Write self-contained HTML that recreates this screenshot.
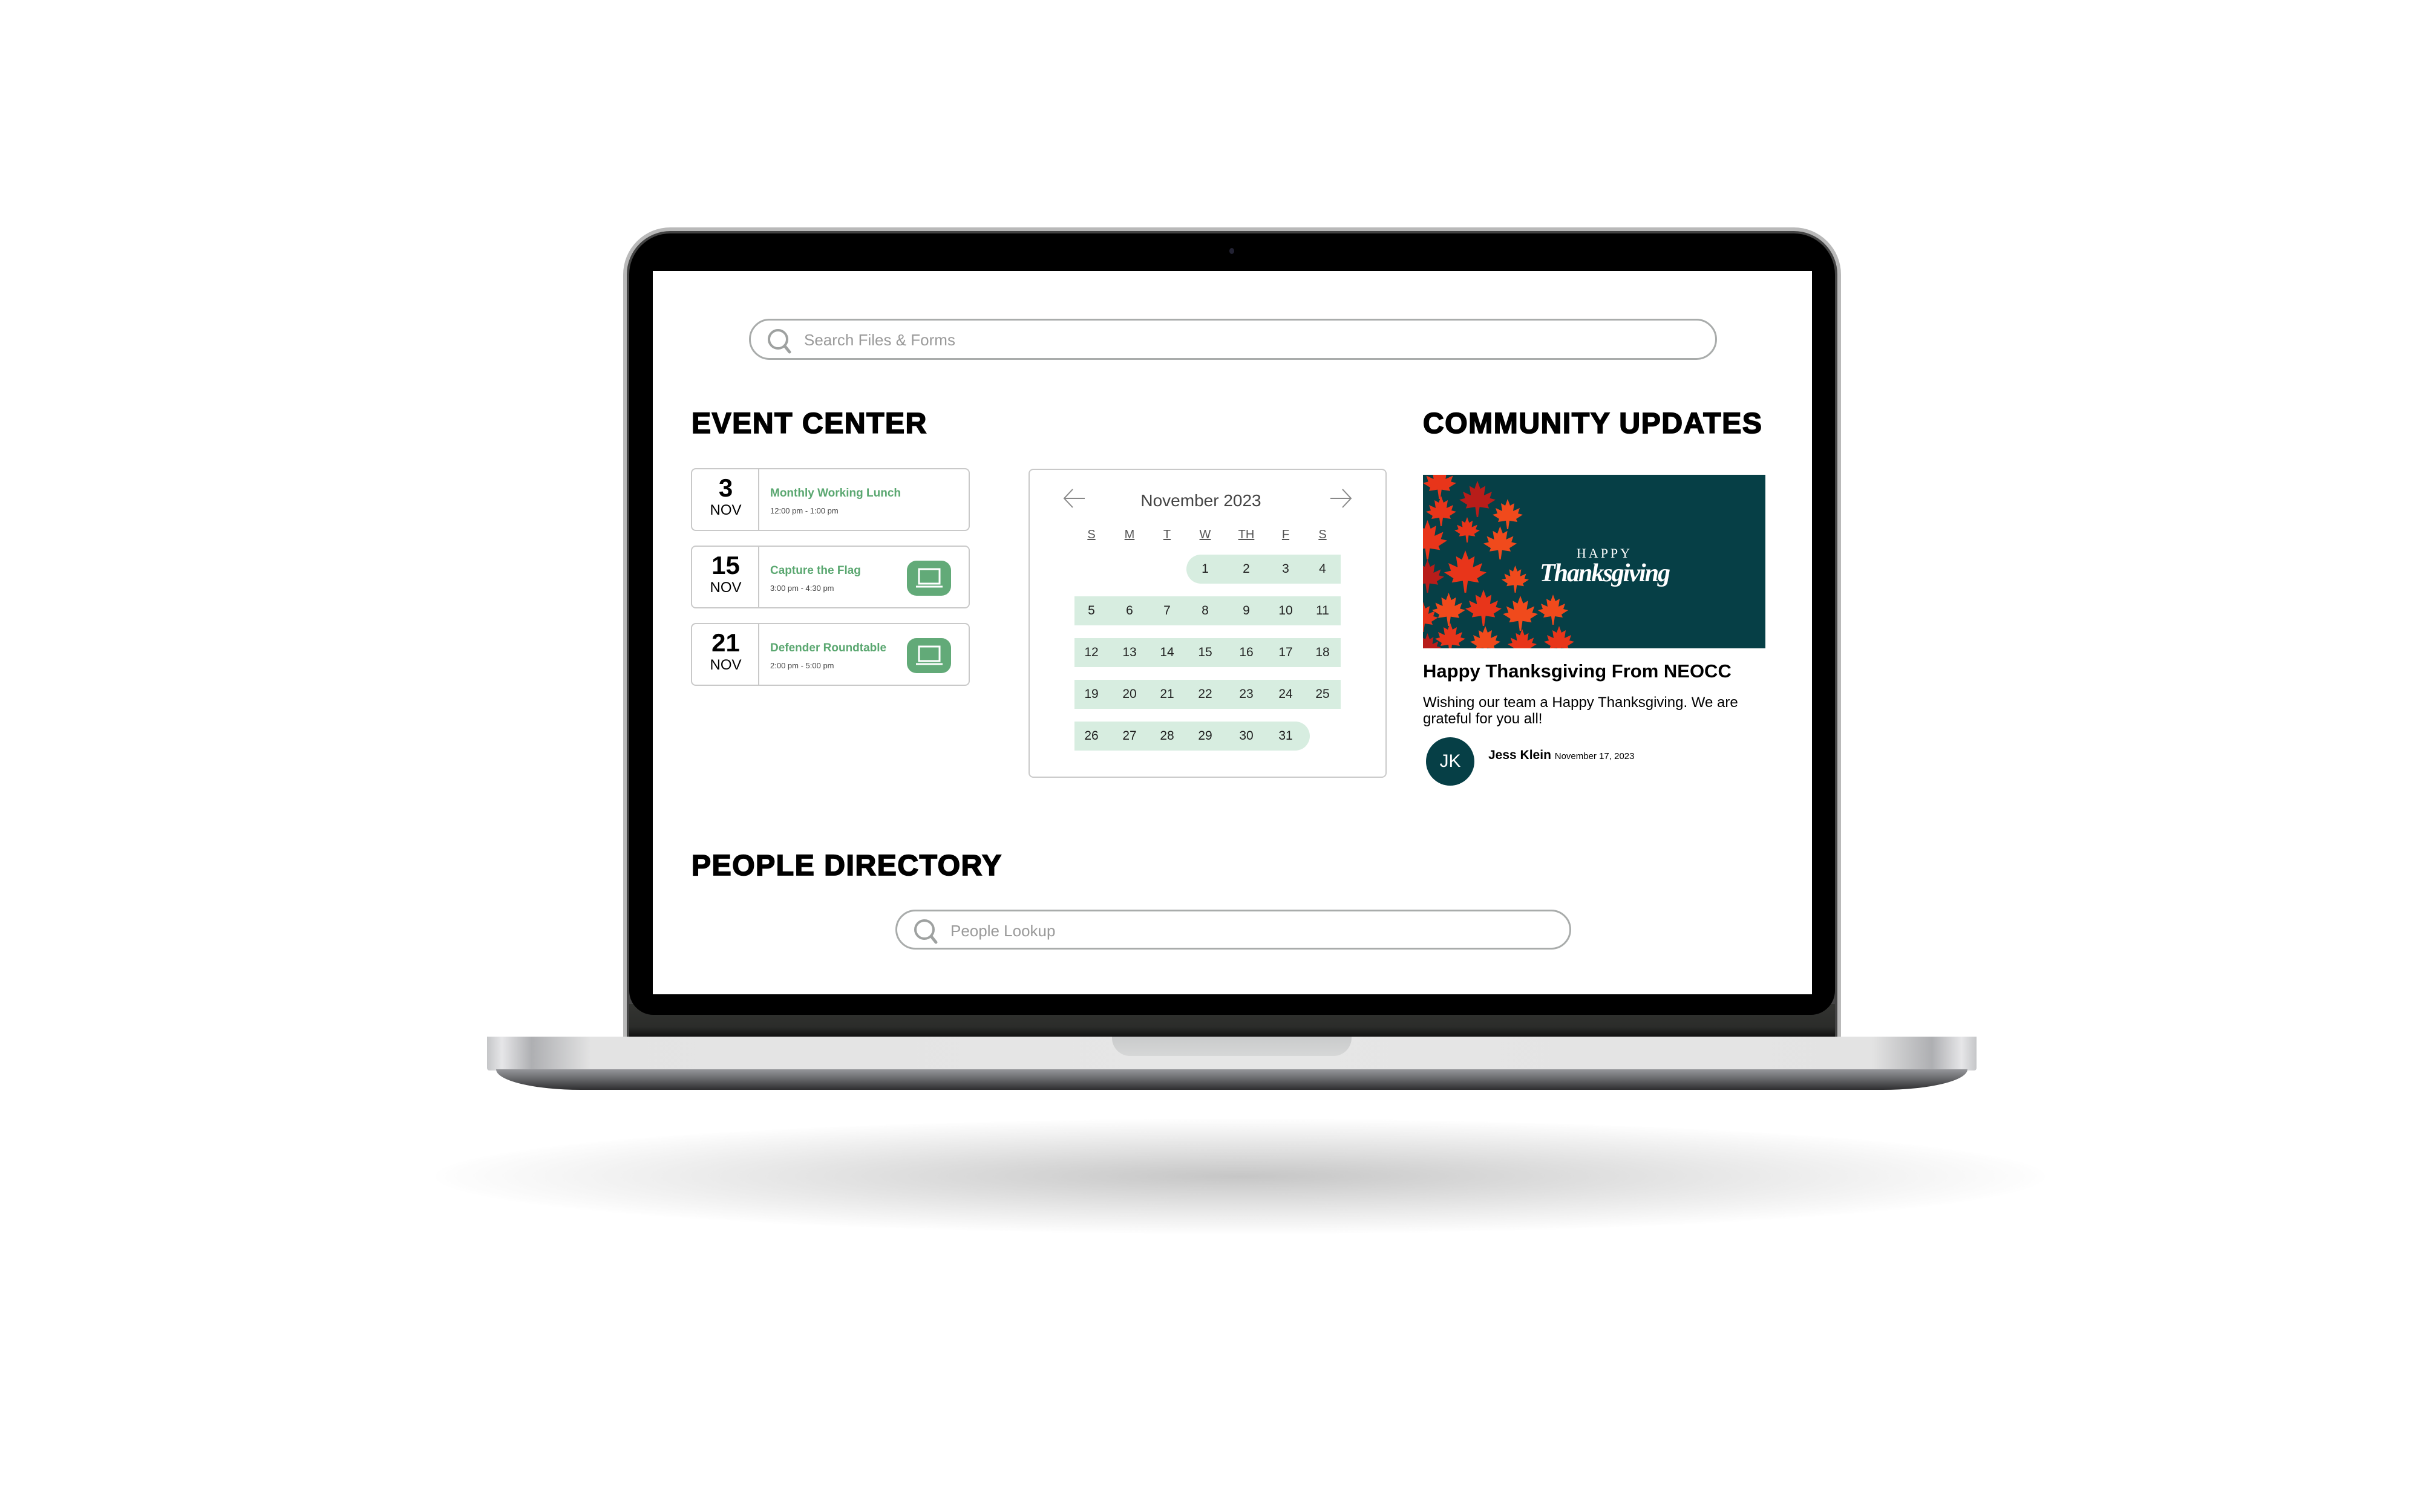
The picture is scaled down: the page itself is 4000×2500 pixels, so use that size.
<!DOCTYPE html>
<html><head><meta charset="utf-8"><style>
*{margin:0;padding:0;box-sizing:border-box}
body{width:4000px;height:2500px;background:#fff;position:relative;overflow:hidden;font-family:"Liberation Sans",Arial,sans-serif}
.a{position:absolute}
.h{position:absolute;font-weight:bold;font-size:48px;color:#000;-webkit-text-stroke:1.8px #000;letter-spacing:1.6px;line-height:1}
.search{position:absolute;border:3px solid #a9acab;border-radius:40px;background:#fff}
.search span{position:absolute;color:#9a9a9a;font-size:26px}
.card{position:absolute;left:1142px;width:461px;height:104px;border:2px solid #c9c9c9;border-radius:8px;background:#fff}
.card .dc{position:absolute;left:0;top:0;width:111px;height:100%;border-right:2px solid #c9c9c9}
.card .n{position:absolute;width:111px;text-align:center;top:10px;font-size:42px;font-weight:bold;line-height:1}
.card .m{position:absolute;width:111px;text-align:center;top:56px;font-size:24px;line-height:1}
.card .t{position:absolute;left:129px;top:30px;font-size:19px;font-weight:bold;color:#5aa770;line-height:1}
.card .tm{position:absolute;left:129px;top:62px;font-size:13px;color:#444;line-height:1}
.card .b{position:absolute;left:355px;top:23px;width:73px;height:58px;border-radius:16px;background:#62aa78}
.band{position:absolute;height:48px;background:#d7ede0}
.num{position:absolute;width:60px;margin-left:-30px;text-align:center;font-size:21px;color:#222;line-height:48px}
.wd{position:absolute;width:60px;margin-left:-30px;text-align:center;font-size:20px;color:#555;text-decoration:underline;line-height:1}
</style></head><body>

<div class="a" style="left:720px;top:1850px;width:2660px;height:190px;border-radius:50%;background:radial-gradient(ellipse at center,rgba(160,160,160,.6) 0%,rgba(195,195,195,.35) 45%,rgba(255,255,255,0) 72%)"></div>

<div class="a" style="left:1030px;top:376px;width:2013px;height:1345px;border-radius:78px 78px 0 0;background:#b9b9b9"></div>
<div class="a" style="left:1036px;top:382px;width:2001px;height:1339px;border-radius:72px 72px 0 0;background:#444"></div>
<div class="a" style="left:1040px;top:1660px;width:1993px;height:54px;background:linear-gradient(#333431,#2b2c2a 70%,#111)"></div>
<div class="a" style="left:1040px;top:386px;width:1993px;height:1292px;border-radius:68px 68px 40px 40px;background:#000"></div>
<div class="a" style="left:2032px;top:410px;width:8px;height:10px;border-radius:50%;background:#223"></div>

<div class="a" style="left:805px;top:1714px;width:2462px;height:56px;background:linear-gradient(90deg,#c5c6c8 0%,#e6e6e8 1%,#aeafb2 3%,#e3e3e3 7%,#e6e6e6 50%,#e3e3e3 93%,#aeafb2 97%,#e6e6e8 99%,#c5c6c8 100%);border-radius:0 0 4px 4px"></div>
<div class="a" style="left:820px;top:1768px;width:2432px;height:34px;border-radius:0 0 140px 140px/0 0 34px 34px;background:linear-gradient(#95969a,#6e6f72 40%,#2e2e30)"></div>
<div class="a" style="left:1838px;top:1714px;width:396px;height:32px;border-radius:0 0 30px 30px;background:linear-gradient(#c9cacb,#d6d7d7)"></div>

<div class="a" style="left:1079px;top:448px;width:1916px;height:1196px;background:#fff;overflow:hidden"></div>

<div class="search" style="left:1238px;top:527px;width:1600px;height:68px">
<svg class="a" style="left:26px;top:12px" width="46" height="46" viewBox="0 0 46 46"><circle cx="19" cy="19" r="15" fill="none" stroke="#9ea1a0" stroke-width="4"/><path d="M30 30 L38 40" stroke="#9ea1a0" stroke-width="5" stroke-linecap="round"/></svg>
<span style="left:88px;top:17px">Search Files &amp; Forms</span>
</div>

<div class="h" style="left:1143px;top:677px">EVENT CENTER</div>
<div class="h" style="left:2352px;top:677px">COMMUNITY UPDATES</div>
<div class="h" style="left:1143px;top:1408px">PEOPLE DIRECTORY</div>

<div class="card" style="top:774px"><div class="dc"></div><div class="n">3</div><div class="m">NOV</div><div class="t">Monthly Working Lunch</div><div class="tm">12:00 pm - 1:00 pm</div></div>
<div class="card" style="top:902px"><div class="dc"></div><div class="n">15</div><div class="m">NOV</div><div class="t">Capture the Flag</div><div class="tm">3:00 pm - 4:30 pm</div>
<div class="b"><svg class="a" style="left:14px;top:12px" width="46" height="34" viewBox="0 0 46 34"><rect x="6" y="2" width="34" height="24" fill="none" stroke="#fff" stroke-width="3"/><path d="M1 31 H45" stroke="#fff" stroke-width="3"/></svg></div></div>
<div class="card" style="top:1030px"><div class="dc"></div><div class="n">21</div><div class="m">NOV</div><div class="t">Defender Roundtable</div><div class="tm">2:00 pm - 5:00 pm</div>
<div class="b"><svg class="a" style="left:14px;top:12px" width="46" height="34" viewBox="0 0 46 34"><rect x="6" y="2" width="34" height="24" fill="none" stroke="#fff" stroke-width="3"/><path d="M1 31 H45" stroke="#fff" stroke-width="3"/></svg></div></div>

<div class="a" style="left:1700px;top:775px;width:592px;height:511px;border:2px solid #c9c9c9;border-radius:8px"></div>
<svg class="a" style="left:1755px;top:806px" width="42" height="36" viewBox="0 0 42 36"><path d="M38 18 H4 M18 3 L4 18 L18 33" fill="none" stroke="#888" stroke-width="2"/></svg>
<svg class="a" style="left:2195px;top:806px" width="42" height="36" viewBox="0 0 42 36"><path d="M4 18 H38 M24 3 L38 18 L24 33" fill="none" stroke="#888" stroke-width="2"/></svg>
<div class="a" style="left:1785px;top:812px;width:400px;text-align:center;font-size:28px;color:#444">November 2023</div>
<div class="wd" style="left:1804px;top:874px">S</div><div class="wd" style="left:1867px;top:874px">M</div><div class="wd" style="left:1929px;top:874px">T</div><div class="wd" style="left:1992px;top:874px">W</div><div class="wd" style="left:2060px;top:874px">TH</div><div class="wd" style="left:2125px;top:874px">F</div><div class="wd" style="left:2186px;top:874px">S</div>
<div class="band" style="left:1961px;top:917px;width:255px;border-radius:24px 0 0 24px"></div>
<div class="band" style="left:1776px;top:986px;width:440px"></div>
<div class="band" style="left:1776px;top:1055px;width:440px"></div>
<div class="band" style="left:1776px;top:1124px;width:440px"></div>
<div class="band" style="left:1776px;top:1193px;width:389px;border-radius:0 24px 24px 0"></div>
<div class="num" style="left:1992px;top:917px">1</div><div class="num" style="left:2060px;top:917px">2</div><div class="num" style="left:2125px;top:917px">3</div><div class="num" style="left:2186px;top:917px">4</div>
<div class="num" style="left:1804px;top:986px">5</div><div class="num" style="left:1867px;top:986px">6</div><div class="num" style="left:1929px;top:986px">7</div><div class="num" style="left:1992px;top:986px">8</div><div class="num" style="left:2060px;top:986px">9</div><div class="num" style="left:2125px;top:986px">10</div><div class="num" style="left:2186px;top:986px">11</div>
<div class="num" style="left:1804px;top:1055px">12</div><div class="num" style="left:1867px;top:1055px">13</div><div class="num" style="left:1929px;top:1055px">14</div><div class="num" style="left:1992px;top:1055px">15</div><div class="num" style="left:2060px;top:1055px">16</div><div class="num" style="left:2125px;top:1055px">17</div><div class="num" style="left:2186px;top:1055px">18</div>
<div class="num" style="left:1804px;top:1124px">19</div><div class="num" style="left:1867px;top:1124px">20</div><div class="num" style="left:1929px;top:1124px">21</div><div class="num" style="left:1992px;top:1124px">22</div><div class="num" style="left:2060px;top:1124px">23</div><div class="num" style="left:2125px;top:1124px">24</div><div class="num" style="left:2186px;top:1124px">25</div>
<div class="num" style="left:1804px;top:1193px">26</div><div class="num" style="left:1867px;top:1193px">27</div><div class="num" style="left:1929px;top:1193px">28</div><div class="num" style="left:1992px;top:1193px">29</div><div class="num" style="left:2060px;top:1193px">30</div><div class="num" style="left:2125px;top:1193px">31</div>

<svg class="a" style="left:2352px;top:785px" width="566" height="287" viewBox="0 0 566 287">
<defs><path id="lf" d="M50 0 L58 22 L72 14 L68 40 L90 30 L84 48 L100 52 L78 66 L82 76 L56 72 L52 100 L48 100 L44 72 L18 76 L22 66 L0 52 L16 48 L10 30 L32 40 L28 14 L42 22 Z"/></defs>
<rect width="566" height="287" fill="#063f46"/>
<g fill="#e8351a">
<use href="#lf" transform="translate(0,-15) scale(.55)"/>
<use href="#lf" transform="translate(60,10) scale(.6)" fill="#b81d1a"/>
<use href="#lf" transform="translate(5,35) scale(.5)"/>
<use href="#lf" transform="translate(115,40) scale(.5)" fill="#f04a1c"/>
<use href="#lf" transform="translate(52,70) scale(.42)"/>
<use href="#lf" transform="translate(-25,75) scale(.65)"/>
<use href="#lf" transform="translate(100,85) scale(.55)" fill="#f04a1c"/>
<use href="#lf" transform="translate(35,125) scale(.7)"/>
<use href="#lf" transform="translate(-20,140) scale(.55)" fill="#b81d1a"/>
<use href="#lf" transform="translate(130,150) scale(.45)" fill="#f04a1c"/>
<use href="#lf" transform="translate(15,195) scale(.55)" fill="#f04a1c"/>
<use href="#lf" transform="translate(70,190) scale(.6)"/>
<use href="#lf" transform="translate(132,200) scale(.58)" fill="#f04a1c"/>
<use href="#lf" transform="translate(190,198) scale(.5)" fill="#f04a1c"/>
<use href="#lf" transform="translate(20,245) scale(.5)"/>
<use href="#lf" transform="translate(78,250) scale(.5)" fill="#f04a1c"/>
<use href="#lf" transform="translate(140,255) scale(.48)"/>
<use href="#lf" transform="translate(200,250) scale(.5)"/>
<use href="#lf" transform="translate(-25,210) scale(.5)"/>
<use href="#lf" transform="translate(-15,262) scale(.45)" fill="#b81d1a"/>
</g>
<text x="300" y="137" text-anchor="middle" font-family="Liberation Serif,serif" font-size="22" fill="#fff" letter-spacing="4">HAPPY</text>
<text x="300" y="176" text-anchor="middle" font-family="Liberation Serif,serif" font-style="italic" font-weight="bold" font-size="42" fill="#fff" letter-spacing="-2">Thanksgiving</text>
</svg>

<div class="a" style="left:2352px;top:1094px;font-size:31px;font-weight:bold;line-height:1">Happy Thanksgiving From NEOCC</div>
<div class="a" style="left:2352px;top:1148px;font-size:24px;line-height:27px;width:540px">Wishing our team a Happy Thanksgiving. We are grateful for you all!</div>
<div class="a" style="left:2357px;top:1219px;width:80px;height:80px;border-radius:50%;background:#063f46;color:#fff;font-size:30px;text-align:center;line-height:80px">JK</div>
<div class="a" style="left:2460px;top:1238px;font-size:21px;font-weight:bold;line-height:1">Jess Klein <span style="font-weight:normal;font-size:15px">November 17, 2023</span></div>

<div class="search" style="left:1480px;top:1504px;width:1117px;height:66px">
<svg class="a" style="left:26px;top:11px" width="46" height="46" viewBox="0 0 46 46"><circle cx="19" cy="19" r="15" fill="none" stroke="#9ea1a0" stroke-width="4"/><path d="M30 30 L38 40" stroke="#9ea1a0" stroke-width="5" stroke-linecap="round"/></svg>
<span style="left:88px;top:17px">People Lookup</span>
</div>
</body></html>
